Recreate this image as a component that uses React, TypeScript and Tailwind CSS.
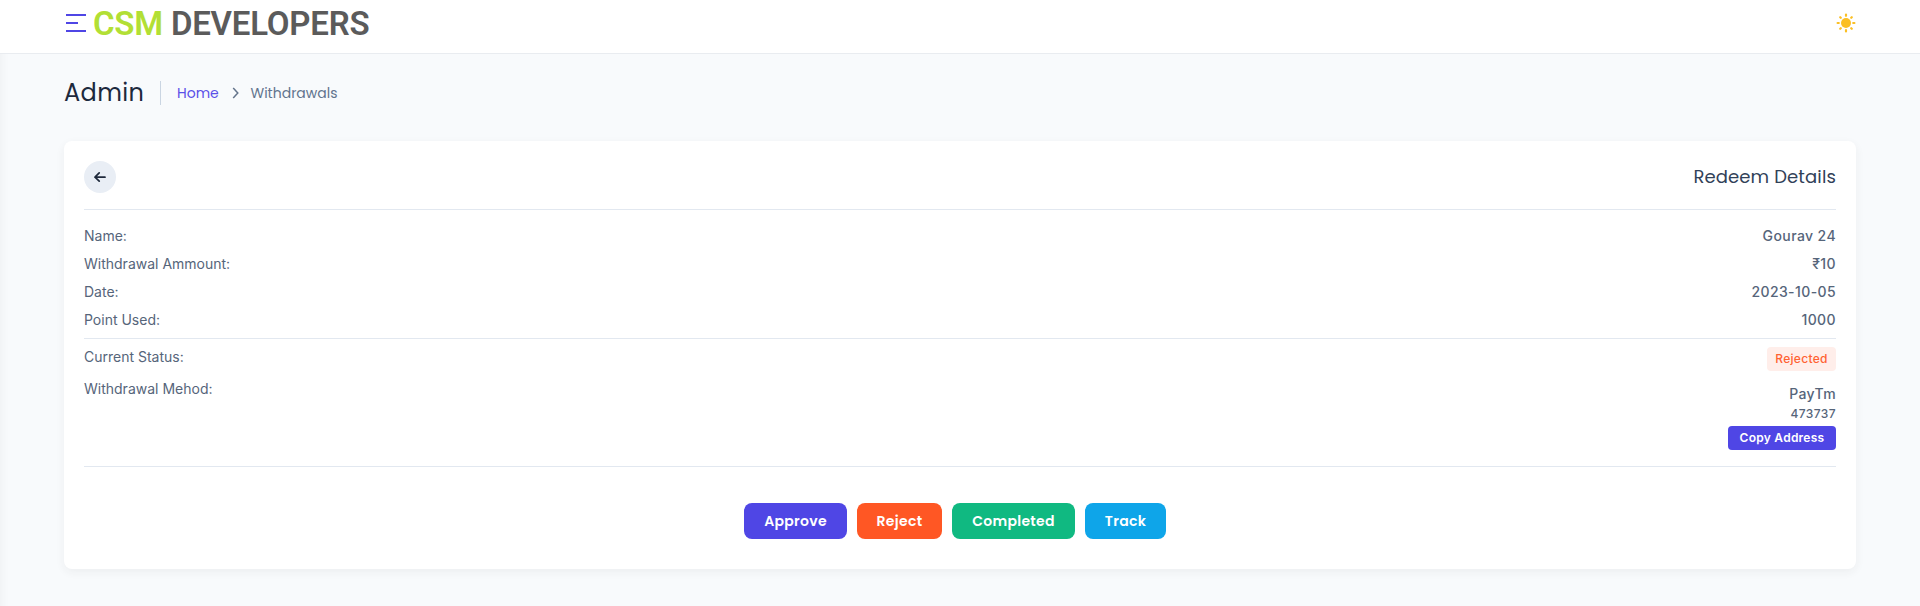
import type { ReactNode } from "react";

const heading = "font-['Poppins','Inter',sans-serif]";

function Row({ label, value }: { label: string; value: string }) {
  return (
    <div className="flex h-5 items-center justify-between">
      <span>{label}</span>
      <span className="font-medium tracking-[0.4px]">{value}</span>
    </div>
  );
}

function ActionButton({ className, children }: { className: string; children: ReactNode }) {
  return (
    <button className={`h-9 rounded-lg text-center text-sm font-semibold tracking-[0.3px] text-white ${heading} ${className}`}>
      {children}
    </button>
  );
}

function Header() {
  return (
    <header className="flex h-[54px] items-start justify-between border-b border-[#e9ecf0] bg-white pl-[66px] pr-16">
      <div className="flex items-start">
        <button aria-label="Menu" className="mt-[14px] flex h-[18px] w-5 flex-col justify-between">
          <span className="h-0.5 w-5 bg-[#4f46e5]" />
          <span className="h-0.5 w-3 bg-[#4f46e5]" />
          <span className="h-0.5 w-5 bg-[#4f46e5]" />
        </button>
        <div className="ml-[7px] mt-[6px] whitespace-nowrap font-['Roboto',sans-serif] text-[33px] font-semibold leading-9 tracking-[-0.22px] text-[#5b5b5b]">
          <span className="text-[#b2df35]">CSM</span> DEVELOPERS
        </div>
      </div>
      <svg className="mt-[13px] h-5 w-5" viewBox="0 0 20 20" fill="none" stroke="#fbbf24" strokeWidth="2.2" strokeLinecap="round">
        <circle cx="10" cy="10" r="5" fill="#fbbf24" stroke="none" />
        <path d="M10 1.6v1.2M10 17.2v1.2M1.6 10h1.2M17.2 10h1.2M4.2 4.2l.6.6M15.2 15.2l.6.6M15.8 4.2l-.6.6M4.8 15.2l-.6.6" />
      </svg>
    </header>
  );
}

export default function App() {
  return (
    <div className="flex h-[606px] w-full flex-col overflow-hidden bg-[#f8fafc] font-['Inter',sans-serif] text-sm text-[#56657a] shadow-[inset_12px_0_10px_-10px_rgba(0,0,0,0.04)]">
      <Header />
      <div className={`mt-[27px] flex h-6 items-center pl-16 ${heading}`}>
        <h1 className="w-24 whitespace-nowrap text-2xl leading-6 tracking-[0.4px] text-slate-800">Admin</h1>
        <div className="h-6 w-px bg-slate-300" />
        <a className="ml-4 w-[55px] text-[#5a50e8]">Home</a>
        <svg className="h-3 w-2" viewBox="0 0 8 12" fill="none" stroke="#64748b" strokeWidth="1.5">
          <path d="M1.2 1l4.6 5-4.6 5" />
        </svg>
        <span className="ml-[10.5px] text-slate-500">Withdrawals</span>
      </div>
      <main className="mx-16 mt-9 flex h-[428px] shrink-0 flex-col rounded-lg bg-white px-5 pt-5 shadow-[0_3px_10px_0_rgba(48,46,56,0.06)]">
        <div className="flex h-8 items-center justify-between">
          <button aria-label="Back" className="flex h-8 w-8 items-center justify-center rounded-full bg-[#e9eef5]">
            <svg className="h-3 w-3" viewBox="0 0 12 12" fill="none" stroke="#1e293b" strokeWidth="1.7" strokeLinecap="round" strokeLinejoin="round">
              <path d="M11 6.2H1M5.2 1.8L1 6.2l4.2 4" />
            </svg>
          </button>
          <h2 className={`text-lg tracking-[0.13px] text-slate-700 ${heading}`}>Redeem Details</h2>
        </div>
        <hr className="mt-4 border-slate-200" />
        <div className="mt-4 flex flex-col gap-2">
          <Row label="Name:" value="Gourav 24" />
          <Row label="Withdrawal Ammount:" value="₹10" />
          <Row label="Date:" value="2023-10-05" />
          <Row label="Point Used:" value="1000" />
        </div>
        <hr className="mt-2 border-slate-200" />
        <div className="mt-2 flex h-6 items-start justify-between">
          <span>Current Status:</span>
          <span className="flex h-6 w-[69px] items-center justify-center rounded bg-[#ffeeea] text-xs font-medium tracking-[0.3px] text-[#ff6232]">Rejected</span>
        </div>
        <div className="mt-2 flex h-[87px] items-start justify-between">
          <span>Withdrawal Mehod:</span>
          <div className="flex flex-col items-end pt-[5px]">
            <span className="h-5 font-medium leading-5 tracking-[0.35px]">PayTm</span>
            <span className="mt-0.5 h-4 text-xs font-medium leading-4 tracking-[0.4px]">473737</span>
            <button className="mt-1 h-6 w-[108px] rounded bg-[#4f46e5] text-xs font-semibold tracking-[0.25px] text-white">Copy Address</button>
          </div>
        </div>
        <hr className="border-slate-200" />
        <div className="mt-9 flex justify-center gap-[10px] pr-[10px]">
          <ActionButton className="w-[103px] bg-[#4f46e5]">Approve</ActionButton>
          <ActionButton className="w-[85px] bg-[#ff5724]">Reject</ActionButton>
          <ActionButton className="w-[123px] bg-[#10b981]">Completed</ActionButton>
          <ActionButton className="w-[81px] bg-[#0ea5e9]">Track</ActionButton>
        </div>
      </main>
    </div>
  );
}
